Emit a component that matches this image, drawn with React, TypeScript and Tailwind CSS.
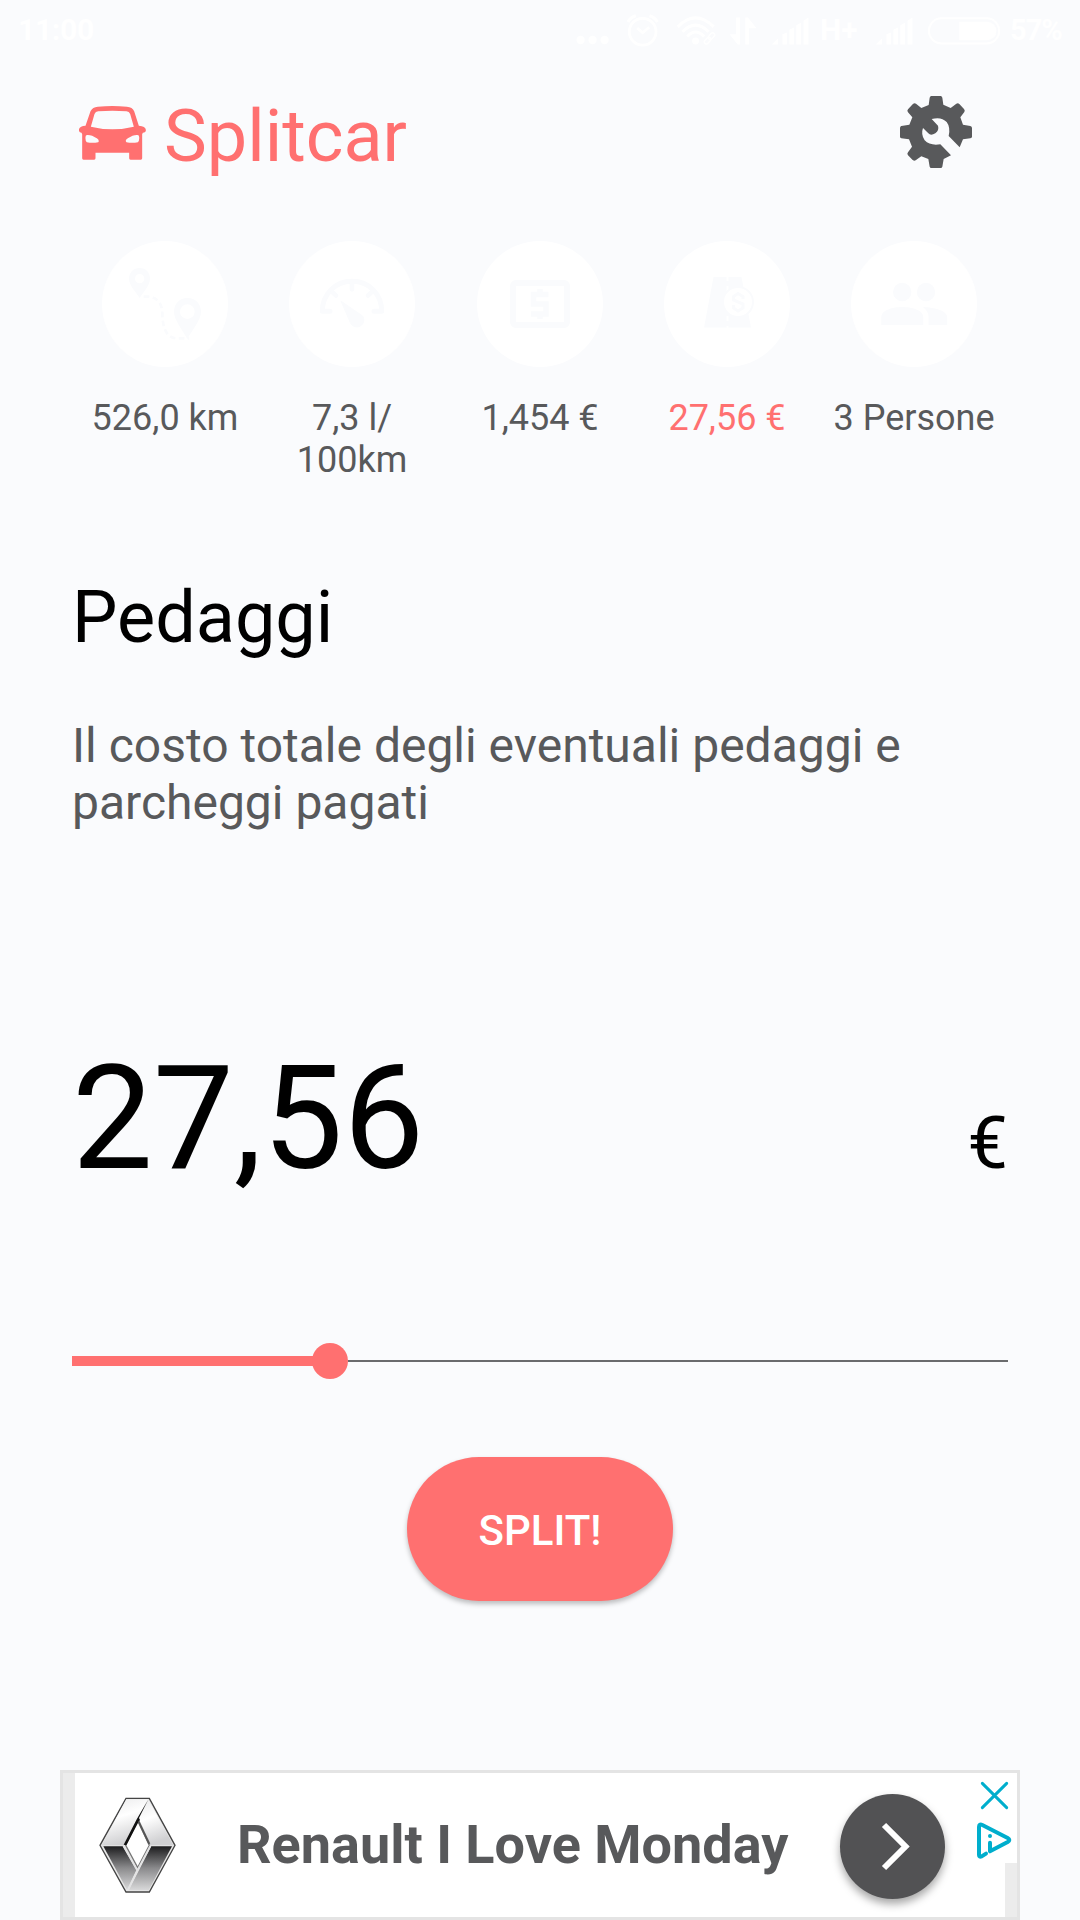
import React from "react";

function StatusBar() {
  return (
    <div className="flex h-[60px] shrink-0 items-center justify-between text-white">
      <span className="pl-[18px] text-[30px] leading-[62px] font-bold tracking-[-0.3px]">11:00</span>
      <div className="flex h-[60px] items-center" aria-label="status">
        <svg className="h-[60px] w-[48px]" viewBox="90 0 140 174" preserveAspectRatio="none" fill="currentColor">
          <circle cx="118" cy="116" r="12" />
          <circle cx="153" cy="116" r="12" />
          <circle cx="188" cy="116" r="12" />
        </svg>
        <svg className="h-[60px] w-[48px]" viewBox="230 0 140 174" preserveAspectRatio="none" fill="none" stroke="currentColor">
          <circle cx="299" cy="92" r="39" strokeWidth="8" />
          <path d="M283 81 L299 95 L318 79" strokeWidth="8" />
          <path d="M256 64 Q264 50 279 46 M342 64 Q334 50 319 46" strokeWidth="9" />
        </svg>
        <svg className="h-[60px] w-[55px]" viewBox="370 0 160 174" preserveAspectRatio="none" fill="none" stroke="currentColor">
          <path d="M401 78 Q453 26 506 78" strokeWidth="9" />
          <path d="M415 92 Q453 54 491 92" strokeWidth="9" />
          <path d="M429 106 Q453 80 478 106" strokeWidth="9" />
          <circle cx="453" cy="119" r="10" fill="currentColor" stroke="none" />
          <g transform="rotate(-48 494 111)" strokeWidth="4">
            <rect x="474" y="105" width="22" height="12" rx="6" />
            <rect x="491" y="105" width="22" height="12" rx="6" />
          </g>
        </svg>
        <svg className="h-[60px] w-[41px]" viewBox="530 0 120 174" preserveAspectRatio="none" fill="currentColor">
          <path d="M571 51H583V129H576L552 99H571Z" />
          <path d="M598 129V51H606L631 82H609V129Z" />
        </svg>
        <SignalIcon />
        <span className="w-[52px] pl-[5px] text-[30px] leading-[62px] font-bold">H+</span>
        <SignalIcon />
        <svg className="h-[60px] w-[86px]" viewBox="1100 0 250 174" preserveAspectRatio="none">
          <rect x="1129" y="53" width="204" height="73" rx="36" fill="none" stroke="currentColor" strokeWidth="6" />
          <path d="M1217 63H1298Q1325 67 1325 90Q1325 113 1298 117H1217Z" fill="currentColor" />
        </svg>
        <span className="w-[75px] pl-[5px] text-[29px] leading-[60px] font-bold tracking-[-1px]">57%</span>
      </div>
    </div>
  );
}

function SignalIcon() {
  return (
    <svg className="h-[60px] w-[52px]" viewBox="650 0 150 174" preserveAspectRatio="none" fill="currentColor">
      <path d="M675 129L693 112V129Z" />
      <path d="M706 129V99L719 94V129Z" />
      <path d="M726 129V86L739 80V129Z" />
      <path d="M746 129V73L760 66V129Z" />
      <path d="M767 129V60L781 51V129Z" />
    </svg>
  );
}

function CarIcon() {
  return (
    <svg className="h-[54px] w-[67px]" viewBox="57 78 200 162" fill="#ff7070" fillRule="evenodd">
      <path d="M113 80Q157 76 200 80Q217 81 222 94L236 137Q256 138 257 149Q258 158 248 158L246 163V235Q246 239 242 239H211Q207 239 207 235V218H106V235Q106 239 102 239H70Q66 239 66 235V163L64 158Q56 158 56 149Q58 138 76 137L91 94Q97 81 113 80ZM114 94Q106 95 103 102L92 140Q157 156 221 140L210 102Q207 95 199 94Q157 91 114 94ZM81 165Q76 165 76 171Q75 183 80 187Q97 190 114 187Q119 181 110 175Q94 164 81 165ZM232 165Q237 165 237 171Q238 183 233 187Q216 190 199 187Q193 181 203 175Q219 164 232 165Z" />
    </svg>
  );
}

function GearIcon() {
  return (
    <svg className="size-[72px]" viewBox="60 48 216 216" fill="#58595b">
      <path d="M154 48H182Q186 49 187 53L190 74L212 84L229 71Q234 68 238 72L252 87Q256 91 253 96L241 112L249 134L271 138Q276 139 276 144V170Q276 174 271 175L249 178L239 202L206 168Q212 142 200 126Q184 109 155 117L174 137Q178 151 166 160Q152 168 145 160L129 144Q122 163 134 181Q150 198 181 193L213 226L191 237L187 260Q186 264 182 264H154Q150 264 149 260L145 237L124 229L107 241Q103 244 98 240L84 226Q80 221 84 217L96 200L87 178L64 175Q60 174 60 170V144Q60 139 64 138L88 134L97 112L84 97Q80 92 84 88L98 73Q103 68 108 71L124 84L146 75L149 53Q150 49 154 48Z" />
    </svg>
  );
}

function RouteIcon() {
  return (
    <svg className="size-[126px]" viewBox="66 33 378 378" fill="#fafbfd">
      <path fillRule="evenodd" d="M179 114C198 114 210 128 210 146C210 166 190 186 179 204C168 186 147 166 147 146C147 128 160 114 179 114ZM179 132A14 14 0 1 0 179 160A14 14 0 1 0 179 132Z" />
      <path fillRule="evenodd" d="M322 204C347 204 363 222 363 245C363 270 337 298 322 327C307 298 282 270 282 245C282 222 298 204 322 204ZM322 223A22 22 0 1 0 322 267A22 22 0 1 0 322 223Z" />
      <path d="M191 200H204C230 200 247 222 247 248C247 290 258 325 290 325H328" fill="none" stroke="#fafbfd" strokeWidth="8" strokeDasharray="17 10" />
    </svg>
  );
}

function GaugeIcon() {
  return (
    <svg className="size-[126px]" viewBox="626 33 378 378" fill="none" stroke="#fafbfd" strokeLinecap="round">
      <path d="M749 244H726C726 193 764 154 815 154C867 154 904 193 904 244H881" strokeWidth="15" strokeLinejoin="round" />
      <path d="M815 158V178M757 187L767 197M873 187L863 197" strokeWidth="14" />
      <path d="M783 214L847 258A21 21 0 1 1 812 282Z" fill="#fafbfd" strokeWidth="3" />
    </svg>
  );
}

function CashIcon() {
  return (
    <svg className="size-[126px]" viewBox="0 0 126 126" fill="none" stroke="#fafbfd">
      <rect x="36" y="42" width="54" height="42" rx="3" strokeWidth="6" />
      <path d="M71.500 53.500H56.500V63H69V73H54M63 48V54M63 73V78" strokeWidth="5.500" />
    </svg>
  );
}

function TollIcon() {
  return (
    <svg className="size-[126px]" viewBox="0 0 126 126" fill="#fafbfd">
      <path d="M49.500 36H77.500L87 86.500H40Z" />
      <path d="M63.500 35V87" stroke="#fff" strokeWidth="2" strokeDasharray="5 5" />
      <circle cx="74" cy="61" r="15" stroke="#fafbfd" strokeWidth="2" fill="#fff" />
      <path d="M79 58V55.500L74 52.500L69.500 55.500V59L79 63V67L74 70L69.500 67V64" fill="none" stroke="#fafbfd" strokeWidth="3" />
    </svg>
  );
}

function PeopleIcon() {
  return (
    <svg className="size-[126px]" viewBox="0 0 126 126" fill="#fafbfd">
      <circle cx="51.200" cy="51" r="9.200" />
      <circle cx="75" cy="51" r="9.200" />
      <path d="M30.300 84V76C30.300 69 42 66 51.200 66S72.200 69 72.200 76V84Z" />
      <path d="M77.600 84V76C77.600 72 75.500 69 72 66C84 66.500 96.200 70 96.200 76V84Z" />
    </svg>
  );
}

const steps = [
  { label: "526,0 km", icon: <RouteIcon />, active: false },
  { label: "7,3 l/\n100km", icon: <GaugeIcon />, active: false },
  { label: "1,454 €", icon: <CashIcon />, active: false },
  { label: "27,56 €", icon: <TollIcon />, active: true },
  { label: "3 Persone", icon: <PeopleIcon />, active: false },
];

function RenaultLogo() {
  return (
    <svg className="h-[96px] w-[77px]" viewBox="176 142 231 288">
      <defs>
        <linearGradient id="dark" x1="0" y1="0" x2="0" y2="1">
          <stop offset="0" stopColor="#1c1c1e" />
          <stop offset="0.5" stopColor="#8b8b8d" />
          <stop offset="1" stopColor="#d9d9da" />
        </linearGradient>
        <linearGradient id="light" x1="0" y1="0" x2="0.300" y2="1">
          <stop offset="0" stopColor="#e9e9ea" />
          <stop offset="0.450" stopColor="#ffffff" />
          <stop offset="1" stopColor="#d0d0d2" />
        </linearGradient>
      </defs>
      <path d="M257 146H327L404 287L327 427H257L179 287Z" fill="#e6e6e6" stroke="#444" strokeWidth="4" />
      <path d="M258 149H323L250 287H184Z" fill="url(#light)" />
      <path d="M325 152L399 287H330L292 208Z" fill="url(#light)" />
      <path d="M189 290H248L288 362L260 420Z" fill="url(#dark)" />
      <path d="M333 290H395L325 422H265Z" fill="url(#dark)" />
      <path d="M292 213L327 287L292 354L256 287Z" fill="#fff" stroke="#777" strokeWidth="4" />
      <path d="M323 151L290 207L250 285L258 287L294 218L299 211L296 205Z" fill="#111" />
      <path d="M295 215L327 283" stroke="#555" strokeWidth="6" />
      <path d="M249 289L291 362L330 289M291 362L263 422" fill="none" stroke="#e3e3e4" strokeWidth="5" />
    </svg>
  );
}

function AdBanner() {
  return (
    <div className="mx-[60px] mt-[169px] flex h-[150px] shrink-0 border-[3px] border-[#e4e4e4] bg-white">
      <div className="w-3 bg-[#ececec]" />
      <div className="ml-6 mt-6">
        <RenaultLogo />
      </div>
      <span className="ml-[61px] mt-[40px] w-[603px] text-[54px] leading-[64px] font-bold whitespace-nowrap text-[#58595b]">
        Renault I Love Monday
      </span>
      <button className="mt-[21px] flex size-[105px] shrink-0 items-center justify-center rounded-full bg-[#525254] shadow-[0_5px_8px_rgba(0,0,0,0.35)]">
        <svg className="size-[105px]" viewBox="0 0 105 105" fill="none" stroke="#fff" strokeWidth="6">
          <path d="M44 31L65.500 52.500L44 74" />
        </svg>
      </button>
      <div className="flex flex-1 flex-col items-end">
        <svg className="mr-[3px] mt-2 h-[80px] w-[44px] shrink-0" viewBox="570 93 132 240" fill="none" stroke="#00aecd" strokeLinecap="round" strokeLinejoin="round">
          <path d="M607 100L680 173M680 100L607 173" strokeWidth="9" />
          <path d="M618 311L605 319Q597 322 597 315V231Q597 221 607 225L683 264Q693 270 683 276L630 304V278" strokeWidth="12" />
          <circle cx="630" cy="258" r="6" fill="#00aecd" stroke="none" />
        </svg>
        <div className="mt-[2px] w-3 flex-1 bg-[#ececec]" />
      </div>
    </div>
  );
}

export default function App() {
  return (
    <div className="flex h-[1920px] w-[1080px] flex-col overflow-hidden bg-[#fafbfd] font-['Roboto',sans-serif]">
      <StatusBar />

      <header className="mt-[35px] flex h-[84px] shrink-0 items-start pl-[79px] pr-[108px] text-[#ff7070]">
        <div className="mt-[11px]">
          <CarIcon />
        </div>
        <h1 className="ml-[18px] flex-1 text-[72px] leading-[84px]">Splitcar</h1>
        <button className="mt-px" aria-label="Settings">
          <GearIcon />
        </button>
      </header>

      <nav className="mx-[72px] mt-[62px] grid h-[240px] shrink-0 grid-cols-[186px_188px_188px_186px_188px]">
        {steps.map((step) => (
          <div key={step.label} className="flex flex-col items-center">
            <div className="size-[126px] overflow-hidden rounded-full bg-white">{step.icon}</div>
            <span
              className={
                step.active
                  ? "mt-[30px] text-center text-[36px] leading-[42px] whitespace-pre text-[#ff7070]"
                  : "mt-[30px] text-center text-[36px] leading-[42px] whitespace-pre text-[#58595b]"
              }
            >
              {step.label}
            </span>
          </div>
        ))}
      </nav>

      <main className="flex shrink-0 flex-col px-[72px] pt-[95px]">
        <h2 className="text-[72px] leading-[84px] text-black">Pedaggi</h2>
        <p className="mt-[57px] text-[48px] leading-[57px] text-[#58595b]">
          Il costo totale degli eventuali pedaggi e<br />
          parcheggi pagati
        </p>
        <div className="mt-[204px] flex h-[168px] items-baseline justify-between text-black">
          <span className="text-[144px] leading-[168px]">27,56</span>
          <span className="text-[72px] leading-[84px]">€</span>
        </div>
        <div className="mt-[140px] flex h-9 items-center">
          <div className="h-[10px] w-[241px] bg-[#ff7070]" />
          <div className="-ml-px size-9 rounded-full bg-[#ff7070]" />
          <div className="h-[2px] flex-1 bg-[#6a6b6d]" />
        </div>
        <button className="mt-[78px] h-[144px] w-[266px] self-center rounded-full bg-[#ff7070] pt-[3px] text-[42px] leading-[141px] font-medium text-white shadow-[0_3px_5px_rgba(0,0,0,0.25)]">
          SPLIT!
        </button>
      </main>

      <AdBanner />
    </div>
  );
}
